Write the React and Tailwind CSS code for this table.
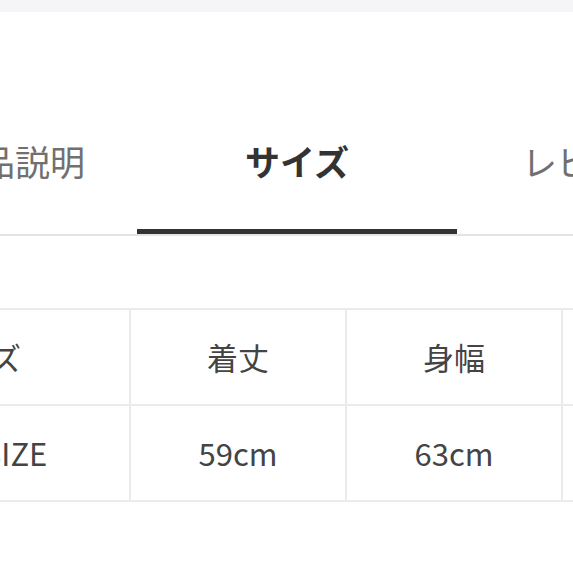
export default function App() {
  const font = { fontFamily: '"Noto Sans CJK JP", "Noto Sans", sans-serif' };
  return (
    <div className="w-[573px] h-[573px] overflow-hidden bg-white relative" style={font}>
      <div className="h-[12px] bg-[#f5f5f8]" />
      <div className="mt-[123px] border-b-2 border-[#e4e4e4]">
        <div className="flex -ml-[107px] w-[900px] text-[35px] leading-[51px]">
          <div className="w-[244px] shrink-0 text-center text-[#707070] pb-[48px]">商品説明</div>
          <div className="w-[320px] shrink-0 flex flex-col items-center">
            <div className="font-bold text-[#333] pb-[43px]">サイズ</div>
            <div className="h-[5px] w-full bg-[#333]" />
          </div>
          <div className="w-[270px] shrink-0 text-center text-[#707070] pb-[48px]">レビュー</div>
        </div>
      </div>
      <div className="mt-[72px] -ml-[159px] w-[1000px]">
        <table className="border-collapse text-[31px] text-[#444]">
          <tbody>
            <tr className="h-[96px]">
              <td className="w-[288px] border-2 border-[#ebebeb] text-center pr-[22px]">サイズ</td>
              <td className="w-[216px] border-2 border-[#ebebeb] text-center">着丈</td>
              <td className="w-[216px] border-2 border-[#ebebeb] text-center">身幅</td>
              <td className="w-[216px] border-2 border-[#ebebeb] text-center">袖丈</td>
            </tr>
            <tr className="h-[96px]">
              <td className="border-2 border-[#ebebeb] text-center pr-[22px]">FREE SIZE</td>
              <td className="border-2 border-[#ebebeb] text-center">59cm</td>
              <td className="border-2 border-[#ebebeb] text-center">63cm</td>
              <td className="border-2 border-[#ebebeb] text-center">50cm</td>
            </tr>
          </tbody>
        </table>
      </div>
    </div>
  );
}
